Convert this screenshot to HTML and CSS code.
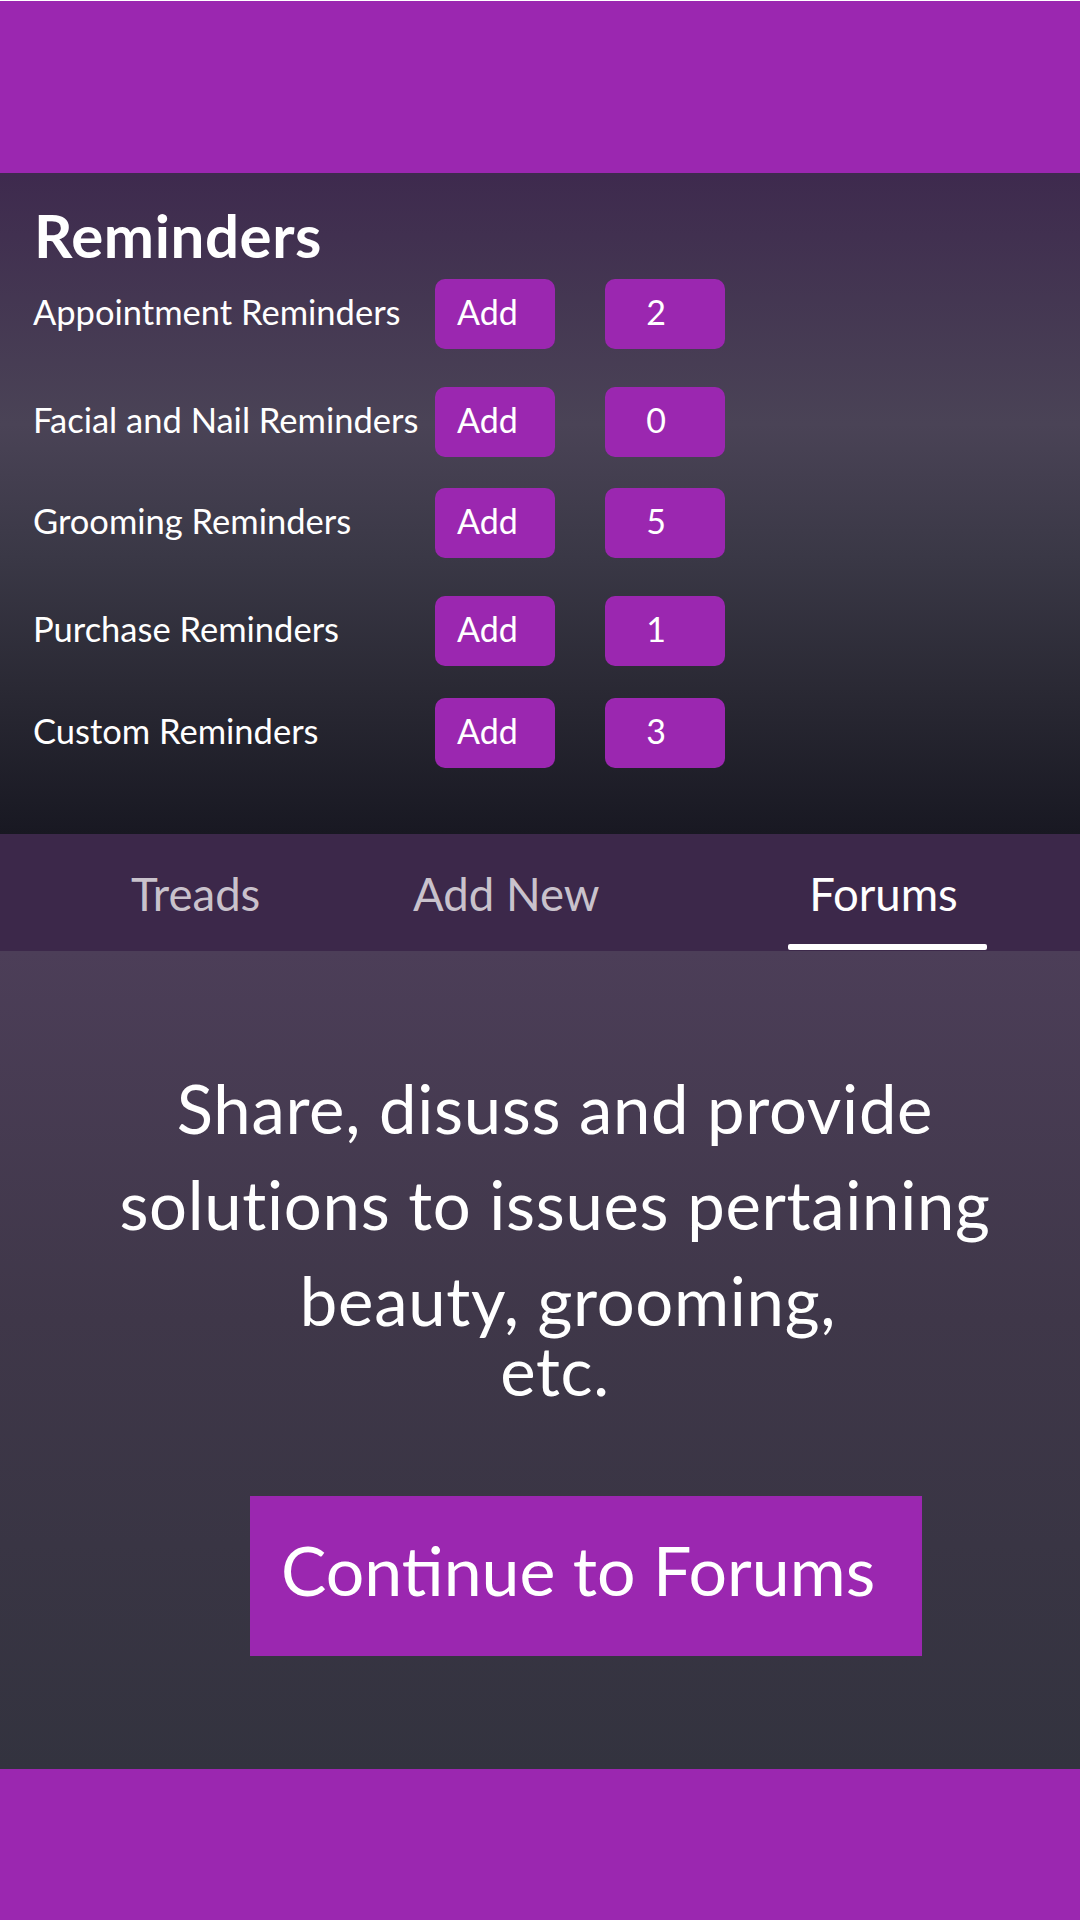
FILE: index.html
```html
<!DOCTYPE html>
<html lang="en">
<head>
<meta charset="utf-8">
<title>Reminders &amp; Forums</title>
<link rel="stylesheet" href="styles.css">
</head>
<body>
<div class="screen">
  <header class="topbar"></header>

  <section class="reminders">
    <h1 class="title">Reminders</h1>
    <div class="list">
      <div class="row"><span class="label">Appointment Reminders</span><button class="btn add">Add</button><button class="btn count">2</button></div>
      <div class="row"><span class="label">Facial and Nail Reminders</span><button class="btn add">Add</button><button class="btn count">0</button></div>
      <div class="row"><span class="label">Grooming Reminders</span><button class="btn add">Add</button><button class="btn count">5</button></div>
      <div class="row"><span class="label">Purchase Reminders</span><button class="btn add">Add</button><button class="btn count">1</button></div>
      <div class="row"><span class="label">Custom Reminders</span><button class="btn add">Add</button><button class="btn count">3</button></div>
    </div>
  </section>

  <nav class="tabs">
    <div class="tab tab-treads"><span class="tab-text">Treads</span></div>
    <div class="tab tab-add"><span class="tab-text">Add New</span></div>
    <div class="tab tab-forums active"><span class="tab-text">Forums</span><span class="underline"></span></div>
  </nav>

  <section class="forum">
    <p class="blurb">
      <span class="line">Share, disuss and provide</span>
      <span class="line">solutions to issues pertaining</span>
      <span class="line shifted">beauty, grooming,</span>
      <span class="line last">etc.</span>
    </p>
    <button class="cta">Continue to Forums</button>
  </section>

  <footer class="bottombar"></footer>
</div>
</body>
</html>
```

FILE: styles.css
```css
* { box-sizing: border-box; }

html, body {
  margin: 0;
  padding: 0;
  background: #33333f;
}

.screen {
  width: 1080px;
  height: 1920px;
  overflow: hidden;
  display: flex;
  flex-direction: column;
  font-family: Lato, "Liberation Sans", sans-serif;
  color: #ffffff;
}

.topbar {
  height: 173px;
  flex: none;
  background: #9b27b0;
  border-top: 1px solid #ffffff;
}

.reminders {
  height: 661px;
  flex: none;
  padding-top: 32px;
  background: linear-gradient(to bottom, #3e2a4e 0%, #4a4356 38%, #3a3846 58%, #2a2934 78%, #181822 100%);
}

.title {
  margin: 0 0 14px 0;
  padding-left: 34px;
  font-size: 60px;
  line-height: 60px;
  font-weight: 700;
  letter-spacing: 0.6px;
}

.list {
  display: flex;
  flex-direction: column;
}

.row {
  display: flex;
  align-items: center;
  height: 70px;
}

.row:nth-child(2) { margin-top: 38px; }
.row:nth-child(3) { margin-top: 31px; }
.row:nth-child(4) { margin-top: 38px; }
.row:nth-child(5) { margin-top: 32px; }

.label {
  width: 435px;
  padding-left: 33px;
  padding-bottom: 6px;
  font-size: 34.5px;
  font-weight: 400;
  white-space: nowrap;
}

.btn {
  width: 120px;
  height: 70px;
  border: none;
  border-radius: 10px;
  background: #9b27b0;
  color: #ffffff;
  font-family: inherit;
  font-size: 34px;
  padding: 0 0 6px 0;
  margin: 0;
}

.btn.add {
  text-align: left;
  padding-left: 22px;
}

.btn.count {
  margin-left: 50px;
  text-align: center;
  padding-right: 18px;
}

.tabs {
  height: 117px;
  flex: none;
  display: flex;
  background: #3c284a;
}

.tab {
  display: flex;
  flex-direction: column;
  padding-top: 35px;
  font-size: 45.5px;
  line-height: 50px;
  color: #c9c2cc;
}

.tab-treads { width: 413px; padding-left: 131px; }
.tab-add { width: 375px; }
.tab-forums { width: 199px; align-items: center; padding-right: 8px; }

.tab.active { color: #ffffff; }

.underline {
  margin-top: auto;
  margin-bottom: 1px;
  margin-right: -8px;
  width: 199px;
  height: 6px;
  border-radius: 2px;
  background: #ffffff;
}

.forum {
  height: 818px;
  flex: none;
  padding-top: 109px;
  background: linear-gradient(to bottom, #4c3e58 0%, #3f3749 45%, #33333f 100%);
}

.blurb {
  margin: 0;
  padding-left: 30px;
  text-align: center;
  font-size: 67px;
  line-height: 96px;
  letter-spacing: 0.7px;
}

.line { display: block; }
.line.shifted { padding-left: 26px; }
.line.last { line-height: 44px; }

.cta {
  display: block;
  margin: 104px 0 0 250px;
  width: 672px;
  height: 160px;
  padding: 0 0 12px 31px;
  border: none;
  border-radius: 0;
  background: #9b27b0;
  color: #ffffff;
  font-family: inherit;
  font-size: 68px;
  line-height: 148px;
  text-align: left;
}

.bottombar {
  flex: 1;
  background: #9b27b0;
}
```
